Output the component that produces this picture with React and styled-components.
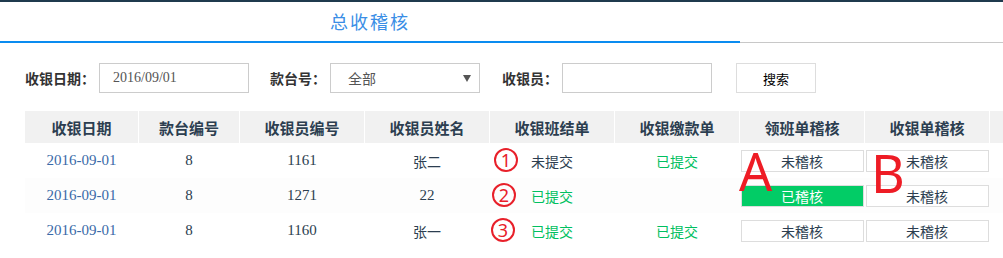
import React from 'react'
import styled, { createGlobalStyle } from 'styled-components'

const GlobalStyle = createGlobalStyle`
  body {
    margin: 0;
    background: #fff;
    font-family: "Noto Sans CJK SC", "Noto Sans", sans-serif;
  }
`

const Page = styled.div`
  width: 1003px;
  height: 258px;
  overflow: hidden;
  border-top: 2px solid #1f3a4d;
  box-sizing: border-box;
`

const TabBar = styled.div`
  display: flex;
  height: 40px;
  border-bottom: 1px solid #c8c8c8;
`

const Tab = styled.div`
  width: 740px;
  display: flex;
  align-items: center;
  justify-content: center;
  border-bottom: 2px solid #0a8cf0;
  margin-bottom: -1px;
  color: #3a8ee6;
  font-size: 18px;
  letter-spacing: 2px;
  padding-bottom: 2px;
`

const Filters = styled.div`
  display: flex;
  align-items: center;
  padding: 20px 0 0 25px;
  height: 30px;
`

const Label = styled.span`
  width: ${p => p.w}px;
  font-weight: bold;
  font-size: 14px;
  color: #333;
`

const Field = styled.div`
  width: ${p => p.w}px;
  height: 30px;
  box-sizing: border-box;
  border: 1px solid #ccc;
  display: flex;
  align-items: center;
  padding-left: ${p => p.pad || 0}px;
  padding-right: 8px;
  margin-right: ${p => p.gap}px;
  font-size: 14px;
  color: #555;
`

const DateText = styled.span`
  font-family: "Liberation Serif", serif;
  font-size: 14px;
  color: #555;
`

const Arrow = styled.span`
  margin-left: auto;
  width: 0;
  height: 0;
  border-left: 4px solid transparent;
  border-right: 4px solid transparent;
  border-top: 7px solid #555;
`

const Button = styled.div`
  width: 80px;
  height: 30px;
  box-sizing: border-box;
  border: 1px solid #ddd;
  display: flex;
  align-items: center;
  justify-content: center;
  font-size: 13px;
  color: #000;
`

const Table = styled.div`
  margin: 18px 0 0 25px;
  position: relative;
`

const cols = '113px 100px repeat(7, 124px)'

const HeadRow = styled.div`
  display: grid;
  grid-template-columns: ${cols};
  column-gap: 1px;
  height: 32px;
`

const HeadCell = styled.div`
  background: #f1f1f1;
  display: flex;
  align-items: center;
  justify-content: center;
  font-weight: bold;
  font-size: 15px;
  color: #2c3e50;
`

const Row = styled.div`
  display: grid;
  grid-template-columns: ${cols};
  column-gap: 1px;
  height: 35px;
  background: ${p => (p.alt ? '#fdfdfd' : '#fff')};
`

const Cell = styled.div`
  display: flex;
  align-items: center;
  justify-content: center;
  position: relative;
  color: ${p => p.color || '#2c3e50'};
  font-family: ${p => (p.serif ? '"Liberation Serif", serif' : 'inherit')};
  font-size: ${p => (p.serif ? 15 : 14)}px;
`

const Status = styled.div`
  width: 123px;
  height: 22px;
  box-sizing: border-box;
  border: 1px solid #ddd;
  background: ${p => (p.done ? '#02cc66' : '#fff')};
  color: ${p => (p.done ? '#fff' : '#2c3e50')};
  display: flex;
  align-items: center;
  justify-content: center;
  font-size: 14px;
`

const Circled = styled.span`
  position: absolute;
  left: ${p => p.left}px;
  top: 5px;
  width: 20px;
  height: 20px;
  border: 2px solid #e8202a;
  border-radius: 50%;
  color: #e8202a;
  font-size: 18px;
  line-height: 20px;
  text-align: center;
  font-family: "Noto Sans", sans-serif;
`

const Mark = styled.span`
  position: absolute;
  left: ${p => p.left}px;
  top: ${p => p.top}px;
  color: #ee1c25;
  font-size: 52px;
  line-height: 1;
  font-family: "Noto Sans", sans-serif;
`

const rows = [
  { id: '1161', name: '张二', shift: '未提交', pay: '已提交', a: false, b: false, n: '1', left: 4 },
  { id: '1271', name: '22', nameSerif: true, shift: '已提交', pay: '', a: true, b: false, n: '2', left: 2 },
  { id: '1160', name: '张一', shift: '已提交', pay: '已提交', a: false, b: false, n: '3', left: 1 }
]

const heads = ['收银日期', '款台编号', '收银员编号', '收银员姓名', '收银班结单', '收银缴款单', '领班单稽核', '收银单稽核', '']

export default function App() {
  return (
    <Page>
      <GlobalStyle />
      <TabBar>
        <Tab>总收稽核</Tab>
      </TabBar>
      <Filters>
        <Label w={74}>收银日期：</Label>
        <Field w={150} pad={13} gap={21}>
          <DateText>2016/09/01</DateText>
        </Field>
        <Label w={60}>款台号：</Label>
        <Field w={150} pad={17} gap={22}>
          全部
          <Arrow />
        </Field>
        <Label w={60}>收银员：</Label>
        <Field w={150} gap={24} />
        <Button>搜索</Button>
      </Filters>
      <Table>
        <HeadRow>
          {heads.map((h, i) => (
            <HeadCell key={i}>{h}</HeadCell>
          ))}
        </HeadRow>
        {rows.map((r, i) => (
          <Row key={r.id} alt={i === 1}>
            <Cell serif color="#3a6aa8">2016-09-01</Cell>
            <Cell serif>8</Cell>
            <Cell serif>{r.id}</Cell>
            <Cell serif={r.nameSerif}>{r.name}</Cell>
            <Cell color={r.shift === '已提交' ? '#00c060' : '#2c3e50'}>
              <Circled left={r.left}>{r.n}</Circled>
              {r.shift}
            </Cell>
            <Cell color="#00c060">{r.pay}</Cell>
            <Cell>
              <Status done={r.a}>{r.a ? '已稽核' : '未稽核'}</Status>
            </Cell>
            <Cell>
              <Status done={r.b}>{r.b ? '已稽核' : '未稽核'}</Status>
            </Cell>
            <Cell />
          </Row>
        ))}
        <Mark left={714} top={34}>A</Mark>
        <Mark left={846} top={36}>B</Mark>
      </Table>
    </Page>
  )
}
